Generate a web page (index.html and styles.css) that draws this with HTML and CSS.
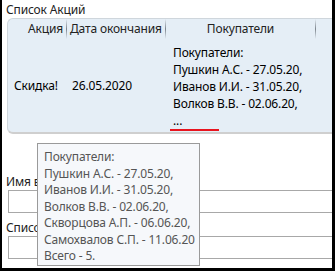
FILE: index.html
```html
<!DOCTYPE html>
<html lang="ru">
<head>
	<meta charset="UTF-8">
	<title>Список Акций</title>
	<link rel="stylesheet" href="styles.css">
</head>
<body>
	<div class="window">
		<div class="title">Список Акций</div>
		<div class="grid">
			<div class="grid-head">
				<div class="hcell col-action right">Акция</div>
				<div class="sep"></div>
				<div class="hcell col-date">Дата окончания</div>
				<div class="sep"></div>
				<div class="hcell col-buyers center">Покупатели</div>
				<div class="sep"></div>
				<div class="hcell col-rest"></div>
			</div>
			<div class="grid-row">
				<div class="cell col-action">Скидка!</div>
				<div class="cell col-date">26.05.2020</div>
				<div class="cell col-buyers">
					<div class="buyers">Покупатели:<br>Пушкин А.С. - 27.05.20,<br>Иванов И.И. - 31.05.20,<br>Волков В.В. - 02.06.20,<br>...</div>
					<div class="mark"></div>
				</div>
			</div>
		</div>
		<div class="fields">
			<div class="label">Имя в</div>
			<div class="input"></div>
			<div class="label">Список</div>
			<div class="input"></div>
		</div>
		<div class="tooltip">Покупатели:<br>Пушкин А.С. - 27.05.20,<br>Иванов И.И. - 31.05.20,<br>Волков В.В. - 02.06.20,<br>Скворцова А.П. - 06.06.20,<br>Самохвалов С.П. - 11.06.20<br>Всего - 5.</div>
	</div>
</body>
</html>
```

FILE: styles.css
```css
*{
	margin: 0;
	padding: 0;
	box-sizing: border-box;
}
body{
	background: #fff;
	font-family: "Noto Sans", "Open Sans", sans-serif;
	font-size: 12px;
	letter-spacing: -0.15px;
	color: #111;
}
.window{
	width: 335px;
	height: 271px;
	border-left: 2px solid #000;
	border-right: 3px solid #000;
	border-bottom: 3px solid #000;
	overflow: hidden;
	position: relative;
}
.title{
	margin-left: 4px;
	padding-top: 2px;
	height: 18px;
	line-height: 16px;
	color: #222;
}
.grid{
	margin-left: 5px;
	width: 340px;
	height: 116px;
	background: #e5eef6;
	border-top: 1px solid #cfd6dc;
	border-left: 1px solid #cfd6dc;
	border-bottom: 2px solid #cfcfcf;
	border-radius: 6px 0 0 6px;
}
.grid-head{
	display: flex;
	height: 20px;
	line-height: 19px;
	color: #222;
}
.hcell{
	white-space: nowrap;
	overflow: hidden;
	padding: 0 3px;
}
.right{
	text-align: right;
}
.center{
	text-align: center;
}
.sep{
	width: 1px;
	background: linear-gradient(#e5eef6, #7c848c 50%, #e5eef6);
}
.col-action{
	width: 58px;
}
.col-date{
	width: 98px;
}
.col-buyers{
	width: 149px;
}
.col-rest{
	flex: 1;
}
.grid-row{
	display: flex;
	align-items: center;
	height: 93px;
	color: #000;
}
.cell{
	white-space: nowrap;
}
.grid-row .col-action{
	padding-left: 6px;
	width: 59px;
}
.grid-row .col-date{
	padding-left: 5px;
	width: 99px;
}
.grid-row .col-buyers{
	padding-left: 4px;
	padding-top: 5px;
	align-self: stretch;
}
.buyers{
	line-height: 17px;
	padding-left: 3px;
}
.mark{
	width: 49px;
	height: 2px;
	background: #e8141e;
}
.fields{
	margin: 40px 0 0 4px;
}
.label{
	height: 16px;
	line-height: 16px;
	color: #222;
}
.input{
	margin-left: 2px;
	height: 23px;
	border: 1px solid #a8a8a8;
	border-right: none;
	margin-bottom: 7px;
	background: #fff;
}
.tooltip{
	position: absolute;
	left: 35px;
	top: 143px;
	width: 163px;
	height: 123px;
	padding: 5px 0 0 6px;
	background: #f6f8fb;
	border: 1px solid #9a9a9a;
	color: #555;
	line-height: 16.5px;
	white-space: nowrap;
	overflow: hidden;
}
```
